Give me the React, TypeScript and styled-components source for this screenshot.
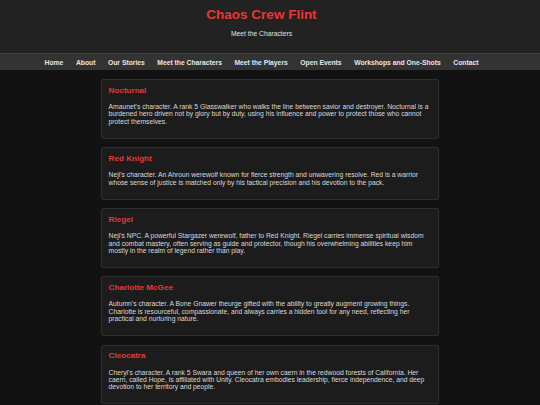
import React from 'react';
import styled, { createGlobalStyle } from 'styled-components';

type Character = {
  name: string;
  bio: string;
};

const characters: Character[] = [
  {
    name: 'Nocturnal',
    bio: "Amaunet's character. A rank 5 Glasswalker who walks the line between savior and destroyer. Nocturnal is a burdened hero driven not by glory but by duty, using his influence and power to protect those who cannot protect themselves.",
  },
  {
    name: 'Red Knight',
    bio: "Neji's character. An Ahroun werewolf known for fierce strength and unwavering resolve. Red is a warrior whose sense of justice is matched only by his tactical precision and his devotion to the pack.",
  },
  {
    name: 'Riegel',
    bio: "Neji's NPC. A powerful Stargazer werewolf, father to Red Knight. Riegel carries immense spiritual wisdom and combat mastery, often serving as guide and protector, though his overwhelming abilities keep him mostly in the realm of legend rather than play.",
  },
  {
    name: 'Charlotte McGee',
    bio: "Autumn's character. A Bone Gnawer theurge gifted with the ability to greatly augment growing things. Charlotte is resourceful, compassionate, and always carries a hidden tool for any need, reflecting her practical and nurturing nature.",
  },
  {
    name: 'Cleocatra',
    bio: "Cheryl's character. A rank 5 Swara and queen of her own caern in the redwood forests of California. Her caern, called Hope, is affiliated with Unity. Cleocatra embodies leadership, fierce independence, and deep devotion to her territory and people.",
  },
];

const navLinks = [
  'Home',
  'About',
  'Our Stories',
  'Meet the Characters',
  'Meet the Players',
  'Open Events',
  'Workshops and One-Shots',
  'Contact',
];

const GlobalStyle = createGlobalStyle`
  html, body {
    margin: 0;
    padding: 0;
    background: #121212;
  }
  body {
    font-family: "Liberation Sans", Arial, sans-serif;
    color: #dcdcdc;
  }
`;

const Header = styled.header`
  background: #222222;
  text-align: center;
  padding: 7px 17px 0 0;
  height: 46px;
`;

const Title = styled.h1`
  margin: 0;
  font-size: 13.5px;
  font-weight: bold;
  color: #e53935;
`;

const Subtitle = styled.p`
  margin: 8.2px 0 0;
  font-size: 6.75px;
  color: #e0e0e0;
`;

const Nav = styled.nav`
  background: #333333;
  border-top: 1px solid #3e3e3e;
  padding-right: 17px;
`;

const NavList = styled.ul`
  list-style: none;
  margin: 0;
  padding: 0;
  display: flex;
  justify-content: center;
  align-items: center;
  height: 16px;
`;

const NavLink = styled.a`
  display: block;
  padding: 0 6.3px;
  font-size: 6.75px;
  font-weight: bold;
  color: #e6e6e6;
  text-decoration: none;
`;

const Main = styled.main`
  padding: 9px 0 20px;
`;

const Card = styled.section`
  box-sizing: border-box;
  width: 338px;
  margin: 0 auto 8.5px;
  padding: 5.7px 6.6px;
  background: #1c1c1c;
  border: 1px solid #2e2e2e;
  border-radius: 2px;
`;

const CardTitle = styled.h3`
  margin: 0 0 8.1px;
  font-size: 8.1px;
  line-height: 9.3px;
  font-weight: bold;
  color: #e53935;
`;

const CardText = styled.p`
  margin: 6.75px 0;
  font-size: 6.75px;
  line-height: 7.4px;
  color: #dadada;
`;

const App: React.FC = () => {
  return (
    <>
      <GlobalStyle />
      <Header>
        <Title>Chaos Crew Flint</Title>
        <Subtitle>Meet the Characters</Subtitle>
      </Header>
      <Nav>
        <NavList>
          {navLinks.map((link) => (
            <li key={link}>
              <NavLink href="#">{link}</NavLink>
            </li>
          ))}
        </NavList>
      </Nav>
      <Main>
        {characters.map((c) => (
          <Card key={c.name}>
            <CardTitle>{c.name}</CardTitle>
            <CardText>{c.bio}</CardText>
          </Card>
        ))}
      </Main>
    </>
  );
};

export default App;
